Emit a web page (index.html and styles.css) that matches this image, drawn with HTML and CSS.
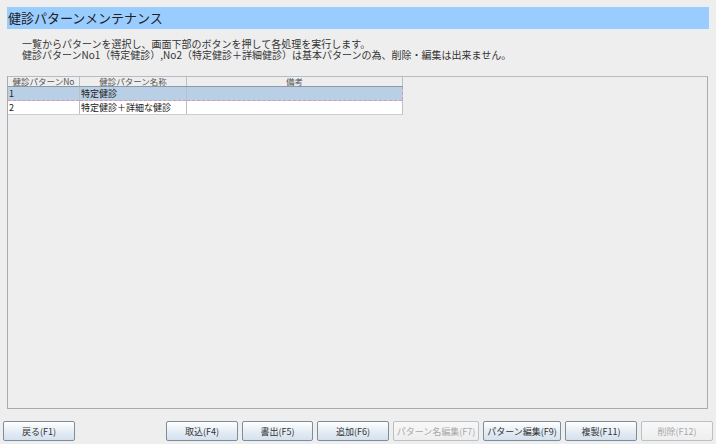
FILE: index.html
```html
<!DOCTYPE html>
<html lang="ja">
<head>
  <meta charset="UTF-8">
  <title>健診パターンメンテナンス</title>
  <link rel="stylesheet" href="styles.css">
</head>
<body>
  <div class="screen">
    <div class="title-bar">健診パターンメンテナンス</div>
    <div class="guide">
      <div>一覧からパターンを選択し、画面下部のボタンを押して各処理を実行します。</div>
      <div>健診パターンNo1（特定健診）,No2（特定健診＋詳細健診）は基本パターンの為、削除・編集は出来ません。</div>
    </div>
    <div class="list-panel">
      <table class="grid">
        <thead>
          <tr>
            <th class="col-no">健診パターンNo</th>
            <th class="col-name">健診パターン名称</th>
            <th class="col-note">備考</th>
          </tr>
        </thead>
        <tbody>
          <tr class="selected">
            <td>1</td>
            <td>特定健診</td>
            <td></td>
          </tr>
          <tr>
            <td>2</td>
            <td>特定健診＋詳細な健診</td>
            <td></td>
          </tr>
        </tbody>
      </table>
    </div>
    <div class="button-bar">
      <button class="btn w72">戻る(F1)</button>
      <div class="btn-group">
        <button class="btn w72">取込(F4)</button>
        <button class="btn w71">書出(F5)</button>
        <button class="btn w72">追加(F6)</button>
        <button class="btn w86" disabled>パターン名編集(F7)</button>
        <button class="btn w78">パターン編集(F9)</button>
        <button class="btn w72">複製(F11)</button>
        <button class="btn w72" disabled>削除(F12)</button>
      </div>
    </div>
  </div>
</body>
</html>
```

FILE: styles.css
```css
html, body { margin: 0; padding: 0; }
body {
  background: #eeeeee;
  font-family: "Noto Sans CJK JP", "Noto Sans", sans-serif;
  color: #333333;
}
.screen {
  width: 716px;
  height: 444px;
  display: flex;
  flex-direction: column;
  box-sizing: border-box;
}
.title-bar {
  margin: 7px 7px 0 7px;
  height: 22px;
  background: #99ccff;
  font-size: 13px;
  line-height: 22px;
  padding-left: 1px;
  color: #222222;
}
.guide {
  margin: 9px 0 0 22px;
  font-size: 10px;
  line-height: 11px;
  color: #333333;
}
.list-panel {
  margin: 16px 8px 0 7px;
  height: 331px;
  border: 1px solid #a3acb5;
  border-top-color: #b5bcc4;
  background: #eeeeee;
}
.grid {
  border-collapse: collapse;
  font-size: 9px;
  table-layout: fixed;
  width: 395px;
}
.grid th {
  height: 8px;
  line-height: 9px;
  padding: 0;
  font-size: 8.5px;
  font-weight: normal;
  color: #555555;
  background: #eeeeee;
  border-right: 1px solid #b8c0c8;
  border-bottom: 1px solid #8c99a6;
  white-space: nowrap;
}
.grid .col-no { width: 71px; }
.grid .col-name { width: 106px; }
.grid td {
  height: 13px;
  line-height: 13px;
  padding: 0 0 0 1px;
  background: #ffffff;
  border-right: 1px solid #b8c0c8;
  border-bottom: 1px solid #c8ced4;
  white-space: nowrap;
  color: #222222;
}
.grid tr.selected td {
  background: #b8cfe5;
  border-bottom: 1px dashed #d898a8;
}
.grid tr.selected td:last-child {
  border-right: 1px dashed #d898a8;
}
.button-bar {
  display: flex;
  justify-content: space-between;
  margin: 12px 3px 0 3px;
}
.btn-group {
  display: flex;
  gap: 4px;
}
.btn {
  height: 20px;
  padding: 0;
  font-family: "Noto Sans CJK JP", "Noto Sans", sans-serif;
  font-size: 9px;
  white-space: nowrap;
  color: #333333;
  border: 1px solid #7f8c99;
  border-radius: 2px;
  background: linear-gradient(#ffffff, #e6eef6 50%, #d4e1ee);
}
.btn:disabled {
  color: #a8a8a8;
  border-color: #b8c0c8;
  background: linear-gradient(#f8f8f8, #eeeeee);
}
.w71 { width: 71px; }
.w72 { width: 72px; }
.w78 { width: 78px; }
.w86 { width: 86px; }
```
